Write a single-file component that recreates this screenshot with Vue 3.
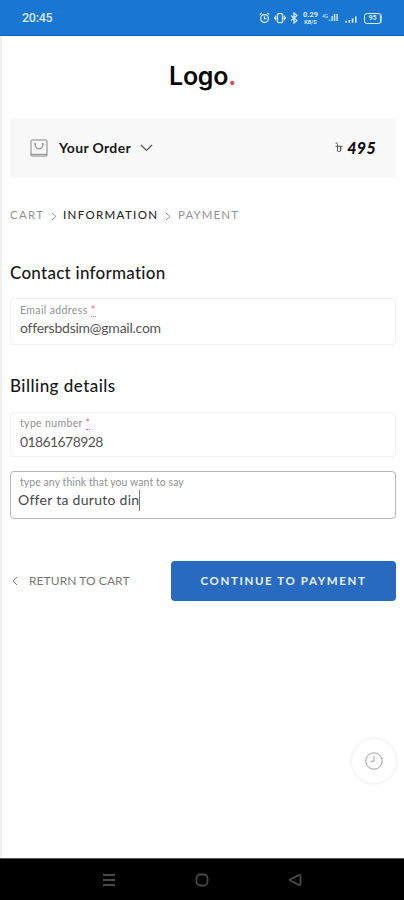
<script setup>
import { ref } from 'vue'

const email = ref('offersbdsim@gmail.com')
const number = ref('01861678928')
const note = ref('Offer ta duruto din')
</script>

<template>
  <div class="screen">
    <header class="status">
      <span class="time">20:45</span>
      <div class="indicators">
        <svg class="alarm" width="11" height="12" viewBox="0 0 11 12">
          <circle cx="5.5" cy="6.5" r="3.9" />
          <path d="M5.5 4.2v2.5h2M.8 2.8 2.8 1M10.2 2.8 8.2 1" />
        </svg>
        <svg class="vibrate" width="12" height="12" viewBox="0 0 12 12">
          <rect x="3.5" y="1.5" width="5" height="9" rx="1" />
          <path d="M1.7 3.5v5M10.3 3.5v5M.3 5v2M11.7 5v2" />
        </svg>
        <svg class="bluetooth" width="8" height="12" viewBox="0 0 8 12">
          <path d="m1 3.5 6 5-3 2.5V1l3 2.5-6 5" />
        </svg>
        <span class="speed"><b>0.29</b><b>KB/S</b></span>
        <span class="network"><sup>4G</sup><b>.ıll</b></span>
        <svg class="signal" width="12" height="12" viewBox="0 0 12 12">
          <path d="M1.2 8.8v2M4.4 8v2.8M7.6 6.3v4.5M10.8 4.5v6.3" />
        </svg>
        <span class="battery">95</span>
      </div>
    </header>

    <main class="page">
      <div class="logo">Logo<span>.</span></div>

      <section class="order">
        <svg class="bag" width="18" height="18" viewBox="0 0 18 18">
          <rect x="1" y="1" width="16" height="16" rx=".8" />
          <path d="M1 15.3h16M5.2 4.8v1.3a3.8 3.8 0 0 0 7.6 0V4.8" />
          <circle cx="5.2" cy="4.8" r=".5" />
          <circle cx="12.8" cy="4.8" r=".5" />
        </svg>
        <span class="order-title">Your Order</span>
        <svg class="down" width="13" height="8" viewBox="0 0 13 8">
          <path d="m1 1 5.5 5.5L12 1" />
        </svg>
        <span class="price">
          <svg class="taka" width="8" height="11" viewBox="0 0 8 11">
            <path d="M.6 1.1c1.5-.5 1.9.3 1.9 1.4v6.3c0 1 1.6 1 2.5.2 1-.9 1.4-2.3.6-3.4M.6 4.3h7M5.5 4.3v5.2" />
          </svg>
          <b>495</b>
        </span>
      </section>

      <nav class="crumbs">
        <span class="cart">CART</span>
        <svg width="6" height="9" viewBox="0 0 6 9"><path d="m1 1 4 3.5L1 8" /></svg>
        <span class="info">INFORMATION</span>
        <svg width="6" height="9" viewBox="0 0 6 9"><path d="m1 1 4 3.5L1 8" /></svg>
        <span class="payment">PAYMENT</span>
      </nav>

      <h2 class="contact">Contact information</h2>
      <div class="field email">
        <label>Email address <abbr>*</abbr></label>
        <div class="value">{{ email }}</div>
      </div>

      <h2 class="billing">Billing details</h2>
      <div class="field number">
        <label>type number <abbr>*</abbr></label>
        <div class="value">{{ number }}</div>
      </div>
      <div class="field note">
        <label>type any think that you want to say</label>
        <div class="value">{{ note }}<i class="caret"></i></div>
      </div>

      <div class="actions">
        <a class="return">
          <svg width="6" height="10" viewBox="0 0 6 10"><path d="M5 1 1 5l4 4" /></svg>
          <span>RETURN TO CART</span>
        </a>
        <button class="continue"><span>CONTINUE TO PAYMENT</span></button>
      </div>

      <button class="clock" aria-label="History">
        <svg width="20" height="20" viewBox="0 0 20 20">
          <circle cx="10" cy="10" r="8.2" />
          <path d="M10 5v5.2H6.6" />
        </svg>
      </button>
    </main>

    <footer class="navbar">
      <svg width="14" height="14" viewBox="0 0 14 14"><path d="M1 2h12M1 7h12M1 12h12" /></svg>
      <svg width="14" height="14" viewBox="0 0 14 14"><rect x="1.5" y="1.5" width="11" height="11" rx="3.5" /></svg>
      <svg width="14" height="14" viewBox="0 0 14 14"><path d="M11.1 2.1 2.3 6.3q-1.2.7 0 1.4l8.8 4.2q1.4.5 1.4-.9V3q0-1.4-1.4-.9Z" /></svg>
    </footer>
  </div>
</template>

<style>
body {
  background: #fff;
}
</style>

<style scoped>
.screen {
  width: 404px;
  height: 900px;
  box-sizing: border-box;
  display: flex;
  flex-direction: column;
  overflow: hidden;
  font-family: Lato, "Open Sans", sans-serif;
  color: #222;
  background: #fff;
}
svg {
  flex: none;
  fill: none;
  stroke: currentColor;
}
.status {
  flex: none;
  height: 36px;
  box-sizing: border-box;
  padding: 0 20px 0 22px;
  border-bottom: 1px solid #0f65be;
  display: flex;
  align-items: center;
  justify-content: space-between;
  background: #1976d2;
  color: #d8eaff;
}
.time {
  font: 500 12.5px/16px Roboto, sans-serif;
  letter-spacing: -.25px;
  padding-top: 1px;
}
.indicators {
  display: flex;
  align-items: center;
  width: 125px;
  padding-top: 1px;
}
.indicators svg { stroke-width: 1.25; }
.vibrate { margin-left: 4px; }
.bluetooth { margin-left: 4px; }
.speed {
  margin-left: 4px;
  width: 17px;
  display: flex;
  flex-direction: column;
  text-align: center;
  font: 7.5px/8px Roboto, sans-serif;
}
.speed b + b {
  font-size: 5.5px;
  line-height: 6px;
}
.network {
  display: flex;
  width: 17px;
  margin-left: 3px;
  font: 9px/12px Roboto, sans-serif;
}
.network sup {
  font-size: 5px;
  line-height: 8px;
}
.indicators .signal {
  margin-left: 6px;
  stroke-width: 1.6;
}
.battery {
  margin-left: 7px;
  width: 17px;
  height: 11px;
  flex: none;
  box-sizing: border-box;
  border: 1px solid #d8eaff;
  border-radius: 3px;
  box-shadow: 1px 0 0 -.2px #b8d7f8;
  text-align: center;
  font: bold 7px/9px Roboto, sans-serif;
}
.page {
  flex: 1;
  min-height: 0;
  display: flex;
  flex-direction: column;
  border-left: 2px solid #f0f0f0;
  padding: 0 8px;
}
.logo {
  margin-top: 24px;
  height: 34px;
  padding-right: 1px;
  text-align: center;
  font: 600 25px/32px Inter, sans-serif;
  letter-spacing: -.25px;
  color: #080808;
}
.logo span { color: #f13b4d; }
.order {
  margin-top: 24px;
  height: 60px;
  flex: none;
  box-sizing: border-box;
  padding: 0 20px;
  display: flex;
  align-items: center;
  border-radius: 3px;
  background: #f8f8f8;
}
.bag { color: #858585; }
.order-title {
  margin-left: 11px;
  width: 74px;
  padding-bottom: 1px;
  white-space: nowrap;
  font-size: 14px;
  font-weight: 700;
  line-height: 20px;
  letter-spacing: .34px;
  color: #181818;
}
.down {
  margin-left: 7px;
  color: #555;
  stroke-width: 1.2;
}
.price {
  margin-left: auto;
  display: flex;
  align-items: center;
  gap: 4px;
  color: #111;
}
.taka {
  color: #555;
  stroke-width: 1;
  margin-bottom: 2px;
}
.price b {
  font-size: 16px;
  font-weight: 900;
  font-style: italic;
  line-height: 20px;
  letter-spacing: .3px;
}
.crumbs {
  margin-top: 27px;
  height: 20px;
  display: flex;
  align-items: center;
  white-space: nowrap;
  font-size: 11.5px;
  line-height: 20px;
  color: #929292;
}
.crumbs svg { margin: 2px 6px 0; }
.cart { width: 35px; letter-spacing: 1.25px; }
.info {
  width: 96px;
  letter-spacing: 1.32px;
  font-weight: 500;
  color: #292929;
}
.payment { padding-left: 1px; letter-spacing: 1.1px; }
h2 {
  margin: 0;
  height: 24px;
  white-space: nowrap;
  font-size: 17px;
  font-weight: 500;
  line-height: 24px;
  color: #181818;
}
.contact { margin-top: 36px; letter-spacing: .26px; }
.billing { margin-top: 29px; letter-spacing: .47px; }
.field {
  flex: none;
  box-sizing: border-box;
  border: 1px solid #f0f0f0;
  border-radius: 4px;
  padding: 4px 9px 0;
}
.field label {
  display: block;
  height: 14px;
  white-space: nowrap;
  font-size: 10.5px;
  line-height: 14px;
  color: #919191;
}
.value {
  display: flex;
  align-items: center;
  height: 22px;
  white-space: nowrap;
  font-size: 14px;
  line-height: 22px;
  color: #555;
}
abbr {
  color: #ed6674;
  border-bottom: 1px dotted #ed6674;
  line-height: 8px;
}
.email { height: 47px; margin-top: 13px; }
.email label { letter-spacing: .38px; }
.email .value { letter-spacing: -.24px; }
.number { height: 45px; margin-top: 14px; }
.number label { height: 14px; line-height: 12px; letter-spacing: .35px; }
.number .value { letter-spacing: -.6px; }
.note {
  height: 48px;
  margin-top: 14px;
  padding-left: 7px;
  border-color: #b5b5b5;
}
.note label { height: 13px; line-height: 12px; padding-left: 2px; letter-spacing: .06px; }
.note .value { letter-spacing: .28px; color: #484848; }
.caret {
  width: 1px;
  height: 21px;
  background: #777;
}
.actions {
  margin-top: 42px;
  height: 40px;
  display: flex;
  align-items: center;
  justify-content: space-between;
}
.return {
  display: flex;
  align-items: center;
  margin-left: 2px;
  color: #777;
  font-size: 12px;
  line-height: 20px;
  letter-spacing: .07px;
  white-space: nowrap;
}
.return span { margin-left: 11px; }
.continue {
  width: 225px;
  height: 40px;
  padding: 0;
  border: 0;
  border-radius: 4px;
  background: #286abf;
  color: #e9f3ff;
  font: 700 11.5px/20px Lato, sans-serif;
  letter-spacing: 1.6px;
  white-space: nowrap;
}
.clock {
  align-self: flex-end;
  margin: 137px -1px 0 0;
  width: 46px;
  height: 46px;
  padding: 0;
  display: grid;
  place-items: center;
  border: 1px solid #f4f4f4;
  border-radius: 50%;
  background: #fff;
  box-shadow: 0 0 3px #eee;
  color: #a3a3a3;
}
.navbar {
  flex: none;
  height: 42px;
  box-sizing: border-box;
  padding: 1px 102px 0;
  border-top: 1px solid #555;
  display: flex;
  align-items: center;
  justify-content: space-between;
  background: #000;
  color: #484848;
}
.navbar svg { stroke-width: 1.8; }
</style>
